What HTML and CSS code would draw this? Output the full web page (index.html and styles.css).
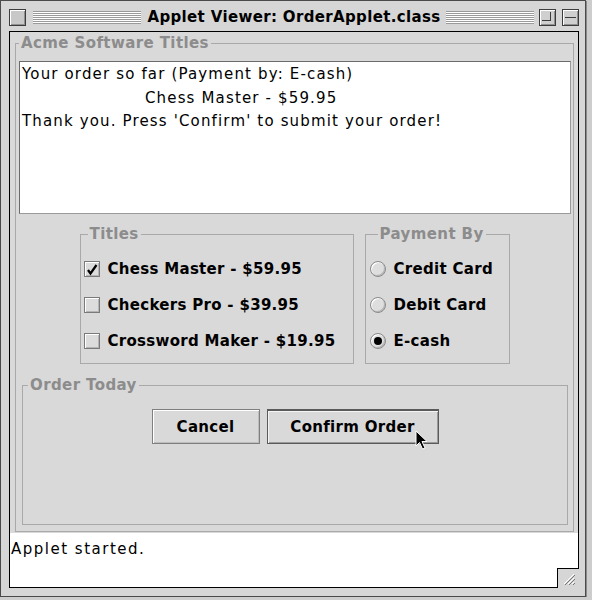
FILE: index.html
```html
<!DOCTYPE html>
<html>
<head>
<meta charset="utf-8">
<link rel="stylesheet" href="styles.css">
</head>
<body>
<div class="window">
  <div class="titlebar">
    <div class="tb-side">
      <span class="closebox"></span>
      <span class="stripes left"></span>
    </div>
    <span class="title">Applet Viewer: OrderApplet.class</span>
    <div class="tb-side">
      <span class="stripes right"></span>
      <span class="zoombox"><span class="zoom-inner"></span></span>
      <span class="shadebox"><span class="shade-line"></span></span>
    </div>
  </div>
  <div class="content">
    <div class="applet">
      <fieldset class="group main">
        <legend>Acme Software Titles</legend>
        <div class="textarea">
          <div class="line">Your order so far (Payment by: E-cash)</div>
          <div class="line indent">Chess Master - $59.95</div>
          <div class="line">Thank you. Press 'Confirm' to submit your order!</div>
        </div>
        <div class="choices">
          <fieldset class="group titles">
            <legend>Titles</legend>
            <div class="row">
              <span class="check checked"><svg width="14" height="14" viewBox="0 0 14 14"><path d="M3 8 L5.5 11.5 L11.5 3" fill="none" stroke="#000" stroke-width="2.2"/></svg></span>
              <span class="label">Chess Master - $59.95</span>
            </div>
            <div class="row">
              <span class="check"></span>
              <span class="label">Checkers Pro - $39.95</span>
            </div>
            <div class="row">
              <span class="check"></span>
              <span class="label">Crossword Maker - $19.95</span>
            </div>
          </fieldset>
          <fieldset class="group payment">
            <legend class="pay-legend">Payment By</legend>
            <div class="row radio-row">
              <span class="radio"></span>
              <span class="label">Credit Card</span>
            </div>
            <div class="row radio-row">
              <span class="radio"></span>
              <span class="label">Debit Card</span>
            </div>
            <div class="row radio-row">
              <span class="radio selected"><span class="dot"></span></span>
              <span class="label">E-cash</span>
            </div>
          </fieldset>
        </div>
        <fieldset class="group order">
          <legend class="order-legend">Order Today</legend>
          <div class="buttons">
            <button class="btn cancel">Cancel</button>
            <button class="btn confirm">Confirm Order<svg class="cursor" width="14" height="21" viewBox="0 0 14 21"><path d="M1 1 L1 16 L4.5 12.5 L7.5 19 L10 18 L7 11.5 L12 11.5 Z" fill="#000" stroke="#fff" stroke-width="1"/></svg></button>
          </div>
        </fieldset>
      </fieldset>
    </div>
    <div class="status">Applet started.</div>
    <div class="growbox"><svg width="16" height="16" viewBox="0 0 16 16"><g stroke-width="1"><path d="M3 13 L13 3" stroke="#fff"/><path d="M4 14 L14 4" stroke="#777"/><path d="M7 13 L13 7" stroke="#fff"/><path d="M8 14 L14 8" stroke="#777"/><path d="M11 13 L13 11" stroke="#fff"/><path d="M12 14 L14 12" stroke="#777"/></g></svg></div>
  </div>
</div>
</body>
</html>
```
FILE: styles.css
```css
* { box-sizing: border-box; }
body {
  margin: 0;
  background: #cdcdcd;
  font-family: "DejaVu Sans", sans-serif;
}
.window {
  width: 586px;
  height: 597px;
  background: #d6d6d6;
  border: 1px solid #4a4a4a;
  padding: 0 6px 8px 8px;
  box-shadow: 1px 1px 0 #8a8a8a;
}
.titlebar {
  height: 30px;
  display: grid;
  grid-template-columns: 1fr auto 1fr;
  align-items: center;
  padding-top: 2px;
}
.tb-side {
  display: flex;
  align-items: center;
}
.closebox {
  flex: none;
  width: 17px;
  height: 17px;
  border: 1px solid #3c3c3c;
  background: #c8c8c8;
  box-shadow: inset 1px 1px 0 #fff, inset -1px -1px 0 #909090;
}
.stripes {
  flex: 1;
  height: 13px;
  background: repeating-linear-gradient(to bottom, #9a9a9a 0 1px, #ffffff 1px 2px);
}
.stripes.left { margin: 0 6px 0 7px; }
.stripes.right { margin: 0 5px 0 5px; }
.title {
  font: bold 15px/18px "DejaVu Sans", sans-serif;
  letter-spacing: 0.35px;
  color: #000;
  white-space: nowrap;
}
.zoombox, .shadebox {
  flex: none;
  width: 17px;
  height: 17px;
  border: 1px solid #3c3c3c;
  background: #cfcfcf;
  box-shadow: inset 1px 1px 0 #fff, inset -1px -1px 0 #909090;
  padding: 2px;
}
.shadebox { margin-left: 6px; display: flex; align-items: center; }
.zoom-inner {
  display: block;
  width: 9px;
  height: 9px;
  border-right: 1px solid #3c3c3c;
  border-bottom: 1px solid #3c3c3c;
}
.shade-line {
  display: block;
  width: 100%;
  height: 1px;
  background: #3c3c3c;
}
.content {
  position: relative;
  height: 557px;
  border: 1px solid #000;
  background: #fff;
}
.applet {
  height: 501px;
  background: #d9d9d9;
  padding: 3px 0 0 5px;
}
.group {
  margin: 0;
  padding: 0;
  min-width: 0;
  border: 1px solid #a9a9a9;
}
legend {
  padding: 0 2px;
  margin-left: 3px;
  font: bold 15px/17px "DejaVu Sans", sans-serif;
  color: #8c8c8c;
  letter-spacing: 0.4px;
}
.main {
  width: 559px;
  height: 497px;
}
.textarea {
  margin: 9px 0 0 3px;
  width: 552px;
  height: 153px;
  background: #fff;
  border: 1px solid #9a9a9a;
  border-top-color: #6a6a6a;
  border-left-color: #6a6a6a;
  padding: 1px 0 0 2px;
  font: 15px/23.5px "DejaVu Sans", sans-serif;
  letter-spacing: 1.15px;
  color: #000;
}
.indent { padding-left: 123px; }
.choices {
  display: flex;
  justify-content: center;
  gap: 11px;
  margin-top: 12px;
}
.titles {
  width: 274px;
  height: 138px;
  padding: 8px 0 0 3px;
}
.titles legend { margin-left: 4px; }
.payment {
  width: 145px;
  height: 138px;
  padding: 8px 0 0 4px;
}
.pay-legend { margin-left: 8px; }
.row {
  height: 36px;
  display: flex;
  align-items: center;
}
.check {
  flex: none;
  width: 16px;
  height: 16px;
  border: 1px solid #7a7a7a;
  background: #dcdcdc;
  box-shadow: inset 1px 1px 0 #fff, inset -1px -1px 0 #b4b4b4;
  margin-right: 8px;
  display: flex;
  align-items: center;
  justify-content: center;
}
.radio {
  flex: none;
  width: 16px;
  height: 16px;
  border-radius: 50%;
  border: 1px solid #8a8a8a;
  background: #dedede;
  box-shadow: inset 1px 1px 0 #fff, inset -1px -1px 0 #b4b4b4;
  margin-right: 8px;
  display: flex;
  align-items: center;
  justify-content: center;
}
.dot {
  width: 8px;
  height: 8px;
  border-radius: 50%;
  background: #000;
}
.label {
  font: bold 15px/18px "DejaVu Sans", sans-serif;
  letter-spacing: 0.3px;
  color: #000;
  white-space: nowrap;
}
.order {
  margin: 13px 0 0 6px;
  width: 546px;
  height: 148px;
}
.order-legend { margin-left: 5px; }
.buttons {
  display: flex;
  justify-content: center;
  gap: 7px;
  padding-top: 15px;
}
.btn {
  height: 35px;
  font: bold 15px/18px "DejaVu Sans", sans-serif;
  letter-spacing: 0.3px;
  color: #000;
  background: #d9d9d9;
  border: 1px solid #7f7f7f;
  box-shadow: inset 1px 1px 0 #fff, inset -1px -1px 0 #bdbdbd;
  padding: 0;
}
.cancel { width: 108px; }
.confirm {
  width: 172px;
  position: relative;
  border-color: #5a5a5a;
  border-top-width: 2px;
  box-shadow: inset 1px 1px 0 #f4f4f4, inset -1px -1px 0 #9a9a9a;
}
.cursor {
  position: absolute;
  left: 147px;
  top: 19px;
}
.status {
  height: 54px;
  padding: 6px 0 0 1px;
  font: 15px/20px "DejaVu Sans", sans-serif;
  letter-spacing: 1.5px;
  color: #000;
}
.growbox {
  position: absolute;
  right: -1px;
  bottom: -1px;
  width: 22px;
  height: 20px;
  border-left: 1px solid #000;
  border-top: 1px solid #000;
  background: #d6d6d6;
  display: flex;
  align-items: center;
  justify-content: center;
}
```
